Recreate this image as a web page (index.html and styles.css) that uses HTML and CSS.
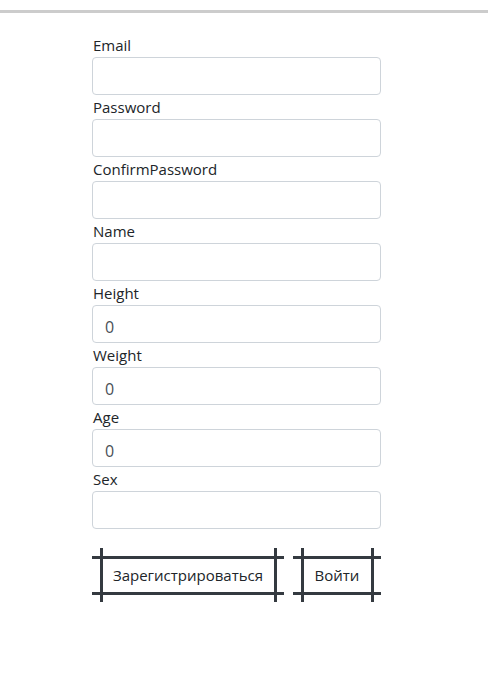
FILE: index.html
```html
<!DOCTYPE html>
<html lang="ru">
<head>
<meta charset="utf-8">
<title>Регистрация</title>
<link rel="stylesheet" href="styles.css">
</head>
<body>
<div class="topbar"></div>
<form class="form">
  <div class="group"><label class="label">Email</label><input class="control" type="text"></div>
  <div class="group"><label class="label">Password</label><input class="control" type="password"></div>
  <div class="group"><label class="label">ConfirmPassword</label><input class="control" type="password"></div>
  <div class="group"><label class="label">Name</label><input class="control" type="text"></div>
  <div class="group"><label class="label">Height</label><input class="control" type="text" value="0"></div>
  <div class="group"><label class="label">Weight</label><input class="control" type="text" value="0"></div>
  <div class="group"><label class="label">Age</label><input class="control" type="text" value="0"></div>
  <div class="group"><label class="label">Sex</label><input class="control" type="text"></div>
  <div class="actions">
    <button class="btn btn-wide" type="button">Зарегистрироваться</button>
    <button class="btn btn-narrow" type="button">Войти</button>
  </div>
</form>
</body>
</html>
```
FILE: styles.css
```css
* { box-sizing: border-box; }
html, body { margin: 0; padding: 0; background: #fff; }
body {
  font-family: "Open Sans", "Noto Sans", sans-serif;
  font-size: 15px;
  color: #212529;
}
.topbar {
  height: 3px;
  margin-top: 10px;
  background: #cccccc;
}
.form {
  width: 289px;
  margin: 20px 0 0 92px;
  display: flex;
  flex-direction: column;
}
.group { display: flex; flex-direction: column; }
.label {
  display: block;
  height: 24px;
  line-height: 24px;
  padding-left: 1px;
}
.control {
  display: block;
  width: 100%;
  height: 38px;
  padding: 9px 12px 3px;
  font-family: inherit;
  font-size: 16px;
  color: #495057;
  border: 1px solid #ced4da;
  border-radius: 4px;
  background: #fff;
  outline: none;
}
.actions {
  display: flex;
  gap: 9px;
  margin-top: 19px;
}
.btn {
  position: relative;
  height: 54px;
  padding: 0 8px;
  border: none;
  background: transparent;
  font-family: inherit;
  font-size: 15px;
  color: #212529;
  cursor: pointer;
}
.btn-wide { width: 192px; }
.btn-narrow { width: 88px; }
.btn::before {
  content: "";
  position: absolute;
  left: 0; right: 0;
  top: 8px; bottom: 7px;
  border-top: 3px solid #343a40;
  border-bottom: 3px solid #343a40;
}
.btn::after {
  content: "";
  position: absolute;
  top: 0; bottom: 0;
  left: 8px; right: 7px;
  border-left: 3px solid #343a40;
  border-right: 3px solid #343a40;
}
```
